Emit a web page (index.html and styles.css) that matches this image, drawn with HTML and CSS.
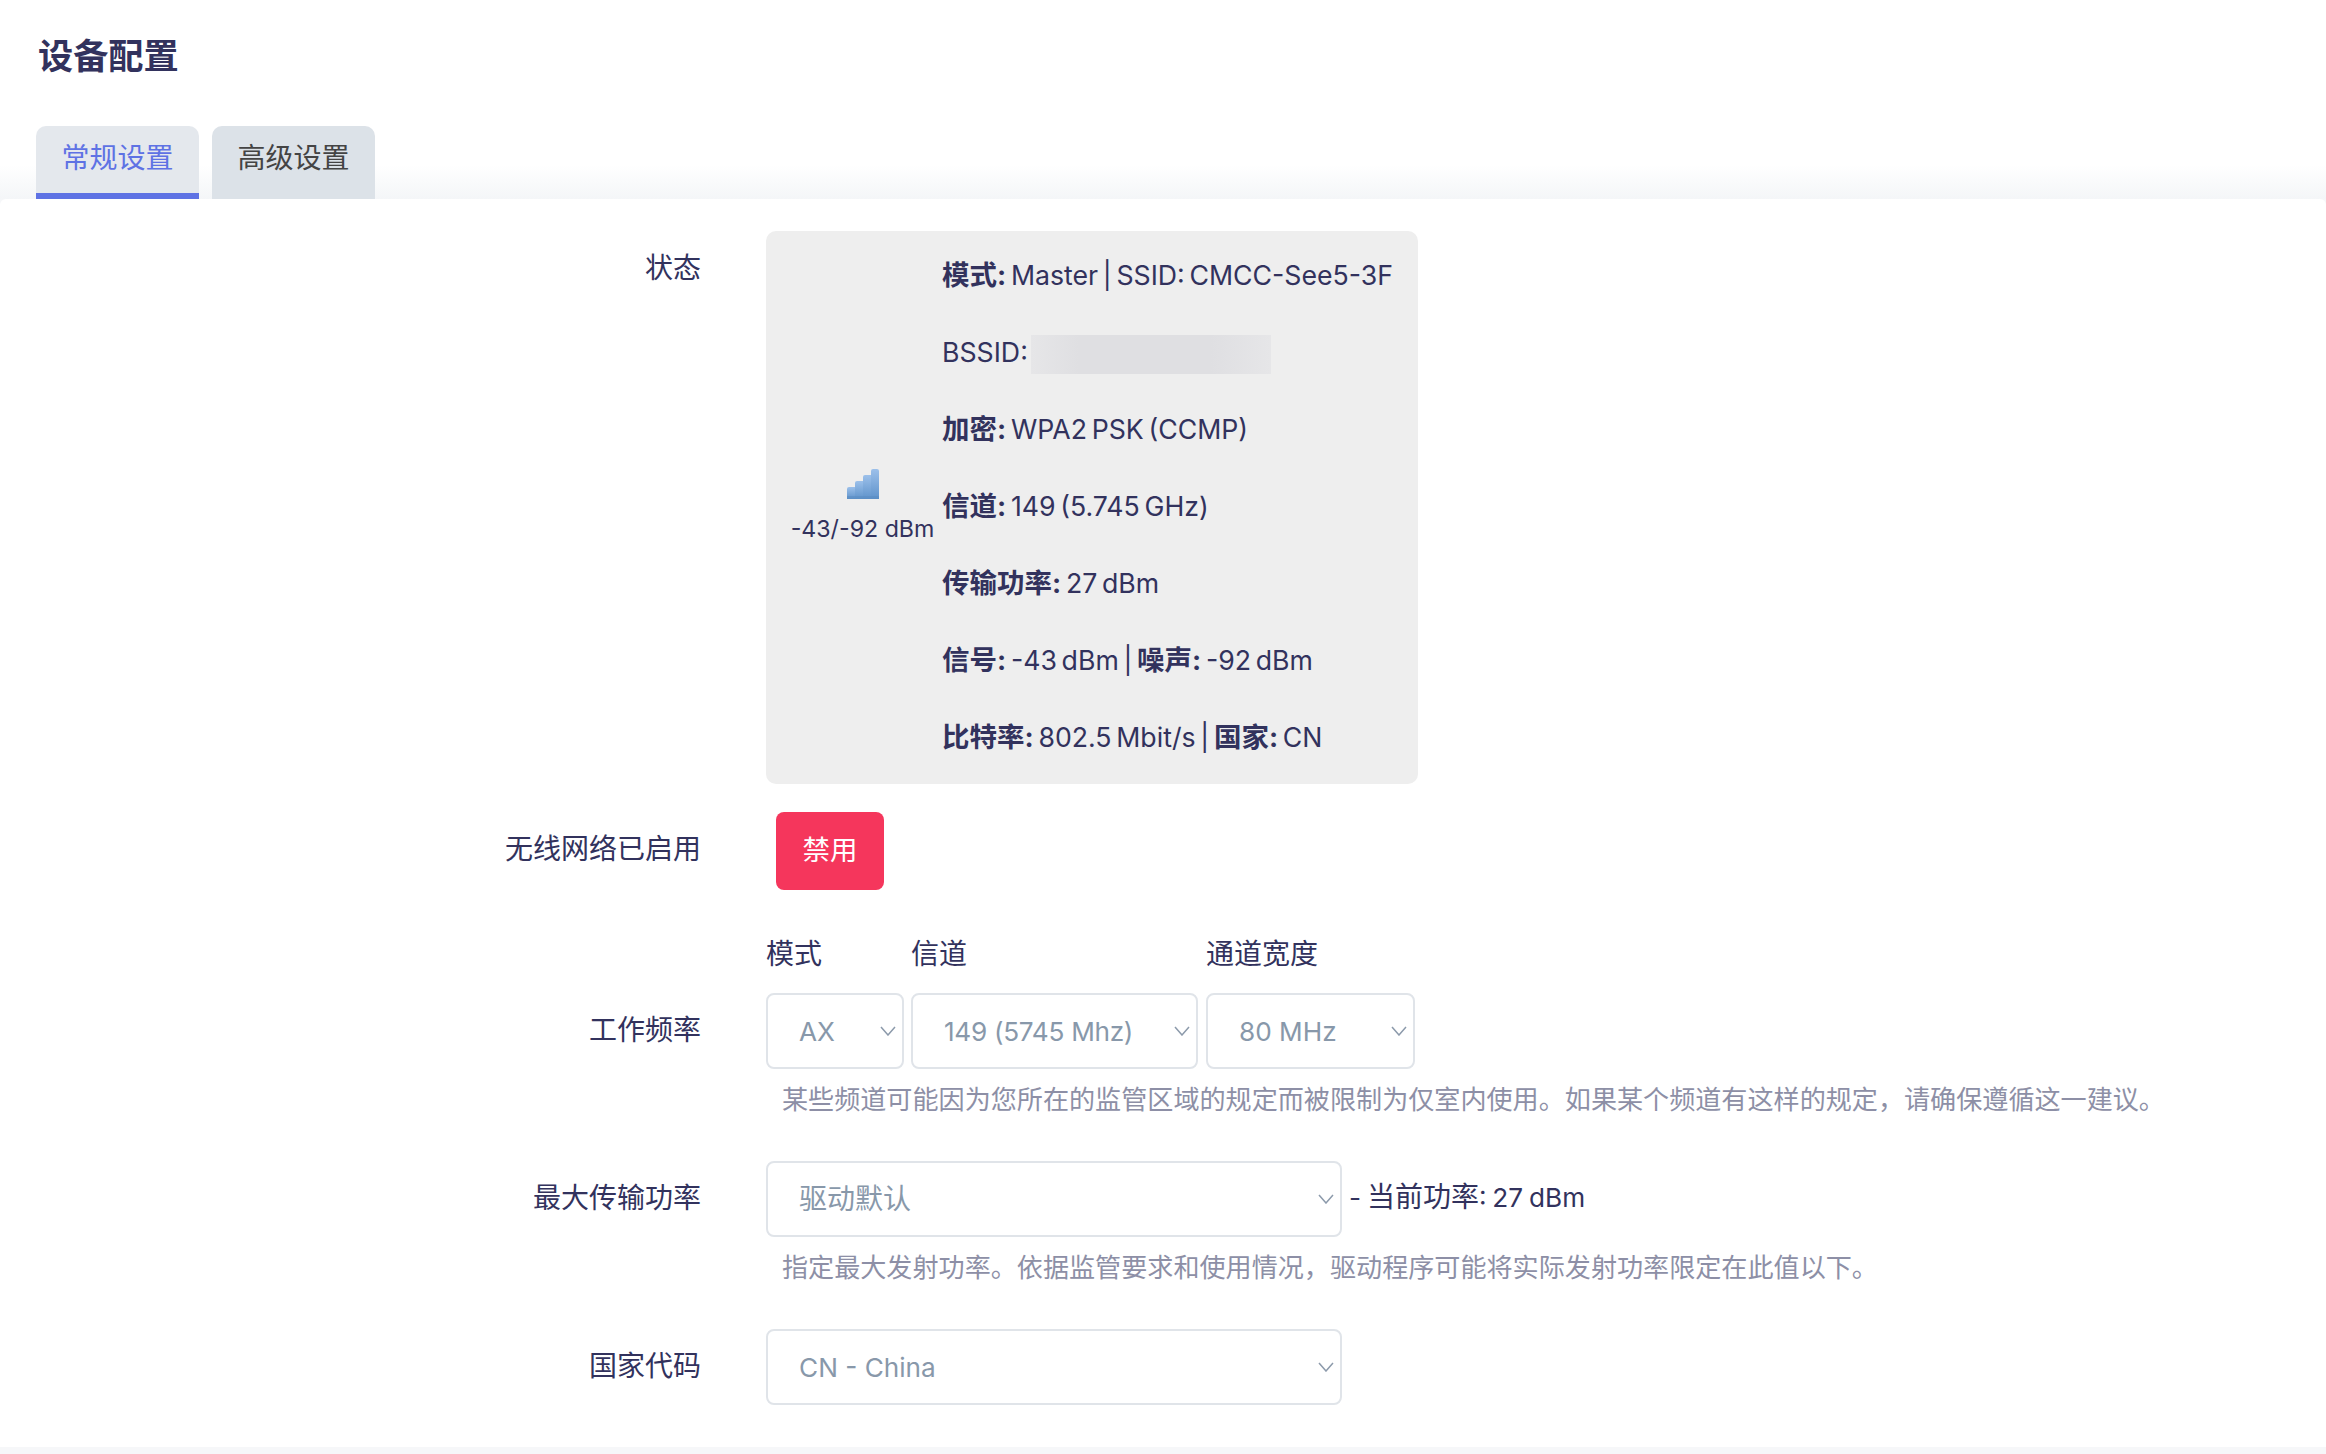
FILE: index.html
```html
<!DOCTYPE html>
<html lang="zh-CN">
<head>
<meta charset="utf-8">
<title>设备配置</title>
<link rel="stylesheet" href="styles.css">
</head>
<body>
<header class="head">
  <h2 class="title">设备配置</h2>
  <nav class="tabs">
    <a class="tab active">常规设置</a>
    <a class="tab">高级设置</a>
  </nav>
</header>
<main class="panel">
  <section class="row status-row">
    <div class="label">状态</div>
    <div class="status">
      <div class="signal">
        <svg class="signal-icon" width="32" height="30" viewBox="0 0 32 30">
          <defs>
            <linearGradient id="barfill" x1="0" y1="0" x2="0" y2="1">
              <stop offset="0" stop-color="#9cc0ea"/>
              <stop offset="1" stop-color="#5f93cb"/>
            </linearGradient>
          </defs>
          <g fill="url(#barfill)">
            <path d="M0 20q0-2 2-2h6v12H0z"/>
            <path d="M8 14q0-2 2-2h6v18H8z"/>
            <path d="M16 8q0-2 2-2h6v24h-8z"/>
            <path d="M24 2q0-2 2-2h4q2 0 2 2v28h-8z"/>
          </g>
          <path d="M0 28.500h32" stroke="#5a8cc2" stroke-width="3" opacity=".5"/>
        </svg>
        <span class="signal-text">-43/-92 dBm</span>
      </div>
      <div class="details">
        <div class="line"><b>模式:</b> Master | SSID: CMCC-See5-3F</div>
        <div class="line">BSSID: <span class="redacted"></span></div>
        <div class="line"><b>加密:</b> WPA2 PSK (CCMP)</div>
        <div class="line"><b>信道:</b> 149 (5.745 GHz)</div>
        <div class="line"><b>传输功率:</b> 27 dBm</div>
        <div class="line"><b>信号:</b> -43 dBm | <b>噪声:</b> -92 dBm</div>
        <div class="line"><b>比特率:</b> 802.5 Mbit/s | <b>国家:</b> CN</div>
      </div>
    </div>
  </section>

  <section class="row toggle-row">
    <div class="label">无线网络已启用</div>
    <button class="danger" type="button">禁用</button>
  </section>

  <section class="freq">
    <div class="sub sub-mode">模式</div>
    <div class="sub">信道</div>
    <div class="sub">通道宽度</div>
    <div class="label freq-label">工作频率</div>
    <div class="sel w-mode">
      <select><option>AX</option></select>
      <svg class="chev" width="16" height="10" viewBox="0 0 16 10"><path d="M1 1l7 8 7-8"/></svg>
    </div>
    <div class="sel w-chan">
      <select><option>149 (5745 Mhz)</option></select>
      <svg class="chev" width="16" height="10" viewBox="0 0 16 10"><path d="M1 1l7 8 7-8"/></svg>
    </div>
    <div class="sel w-width">
      <select><option>80 MHz</option></select>
      <svg class="chev" width="16" height="10" viewBox="0 0 16 10"><path d="M1 1l7 8 7-8"/></svg>
    </div>
    <p class="help freq-help">某些频道可能因为您所在的监管区域的规定而被限制为仅室内使用。如果某个频道有这样的规定，请确保遵循这一建议。</p>
  </section>

  <section class="row power-row">
    <div class="label">最大传输功率</div>
    <div class="field">
      <div class="inline">
        <div class="sel w-wide">
          <select class="cjk"><option>驱动默认</option></select>
          <svg class="chev" width="16" height="10" viewBox="0 0 16 10"><path d="M1 1l7 8 7-8"/></svg>
        </div>
        <span class="current">- <span class="zh">当前功率</span>: 27 dBm</span>
      </div>
      <p class="help">指定最大发射功率。依据监管要求和使用情况，驱动程序可能将实际发射功率限定在此值以下。</p>
    </div>
  </section>

  <section class="row country-row">
    <div class="label">国家代码</div>
    <div class="sel w-wide">
      <select><option>CN - China</option></select>
      <svg class="chev" width="16" height="10" viewBox="0 0 16 10"><path d="M1 1l7 8 7-8"/></svg>
    </div>
  </section>
</main>
</body>
</html>
```
FILE: styles.css
```css
* { box-sizing: border-box; }
html, body { margin: 0; height: 100%; }
body {
  background: #f6f7f9;
  color: #32325d;
  font-family: Inter, "Noto Sans CJK SC", sans-serif;
  font-size: 26.200px;
  overflow: hidden;
}
.head {
  height: 199px;
  padding: 34px 0 0 38px;
  background: linear-gradient(to bottom, #fff 0, #fff 165px, #f4f6f8 199px);
}
.title {
  margin: 0;
  font-size: 35.200px;
  line-height: 44px;
  font-weight: 700;
}
.tabs {
  display: flex;
  gap: 13px;
  margin: 48px 0 0 -2px;
}
.tab {
  width: 163px;
  height: 73px;
  padding-top: 16px;
  border-radius: 10px 10px 0 0;
  background: #dce2e8;
  color: #444;
  font-size: 28px;
  line-height: 32px;
  text-align: center;
}
.tab.active {
  background: #e4e8ed;
  color: #5e72e4;
  border-bottom: 6px solid #5e72e4;
}
.panel {
  height: 1248px;
  background: #fff;
  border-radius: 6px 6px 0 0;
  padding-top: 32px;
}
.row {
  display: grid;
  grid-template-columns: 701px 1fr;
  column-gap: 65px;
}
.label {
  font-size: 28px;
  line-height: 74px;
  text-align: right;
}
.status-row { margin-bottom: 28px; }
.status {
  display: flex;
  align-items: center;
  gap: 8px;
  width: 652px;
  height: 553px;
  padding: 6px 0 8px 25px;
  border-radius: 10px;
  background: #eee;
}
.signal {
  display: flex;
  flex-direction: column;
  align-items: center;
  gap: 14px;
  width: 143px;
}
.signal-icon { filter: blur(.6px); }
.signal-text {
  font-size: 23.200px;
  line-height: 32px;
  white-space: nowrap;
}
.line {
  height: 77px;
  font-size: 26.700px;
  line-height: 77px;
  word-spacing: -2.800px;
  white-space: pre-wrap;
}
.line b {
  font-size: 27.500px;
  font-weight: 700;
}
.redacted {
  display: inline-block;
  vertical-align: middle;
  width: 240px;
  height: 39px;
  margin-left: -2px;
  background: linear-gradient(to right, #e6e6e8, #dfdfe2 20%, #dfdfe2 75%, #e6e6e8);
}
.danger {
  width: 108px;
  height: 78px;
  margin-left: 10px;
  padding: 0 0 6px;
  border: 0;
  border-radius: 8px;
  background: #f5365c;
  color: #fff;
  font: inherit;
  font-size: 27.500px;
}
.toggle-row { margin-bottom: 43px; align-items: start; }
.freq {
  display: grid;
  grid-template-columns: 766px 145px 295px 209px;
  grid-template-rows: 40px 76px auto;
  row-gap: 20px;
  margin-bottom: 41px;
}
.sub { padding-top: 1px; font-size: 28px; line-height: 40px; }
.sub-mode { grid-column: 2; }
.freq-label { grid-column: 1; grid-row: 2; margin-right: 65px; }
.w-mode { grid-column: 2; grid-row: 2; }
.w-chan { grid-column: 3; grid-row: 2; }
.w-width { grid-column: 4; grid-row: 2; }
.freq-help { grid-column: 2 / span 4; grid-row: 3; white-space: nowrap; }
.help {
  margin: 11px 0 0;
  padding-left: 16px;
  font-size: 26.100px;
  line-height: 40px;
  color: #8d8fa6;
}
.freq .help { margin-top: -9px; }
.sel { position: relative; height: 76px; }
.w-mode { width: 138px; }
.w-chan { width: 287px; }
.w-width { width: 209px; }
.w-wide { width: 576px; }
.sel select {
  width: 100%;
  height: 100%;
  padding: 0 30px 0 31px;
  appearance: none;
  border: 2px solid #e0e4e9;
  border-radius: 8px;
  background: #fff;
  color: #8898aa;
  font: inherit;
  font-size: 26.200px;
}
.sel select.cjk { font-size: 28px; }
.w-chan select { letter-spacing: -.3px; }
.chev {
  position: absolute;
  right: 8px;
  top: 33px;
  fill: none;
  stroke: #8c9aab;
  stroke-width: 1.500;
}
.inline {
  display: flex;
  align-items: center;
  gap: 7px;
}
.current {
  margin-top: -3px;
  line-height: 1;
  word-spacing: -1.500px;
  white-space: nowrap;
}
.zh { font-size: 28px; }
.power-row { margin-bottom: 41px; }
```
